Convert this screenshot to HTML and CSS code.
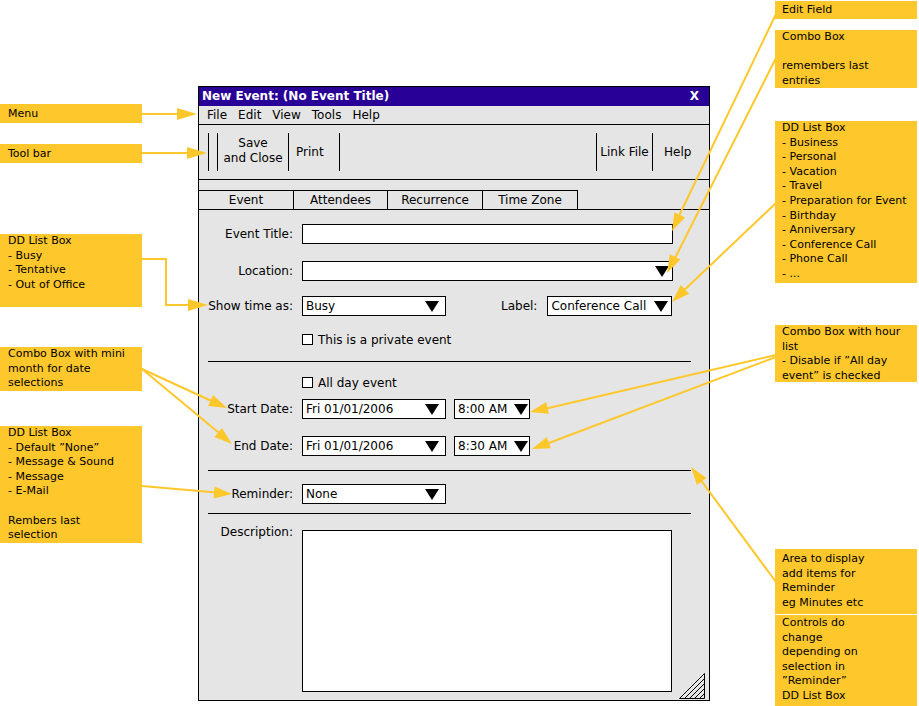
FILE: index.html
```html
<!DOCTYPE html>
<html>
<head>
<meta charset="utf-8">
<title>New Event</title>
<link rel="stylesheet" href="styles.css">
</head>
<body>
<div class="canvas">
  <div class="note l n-menu">Menu</div>
  <div class="note l n-tool">Tool bar</div>
  <div class="note l n-busy">DD List Box<br>- Busy<br>- Tentative<br>- Out of Office</div>
  <div class="note l n-month">Combo Box with mini<br>month for date<br>selections</div>
  <div class="note l n-remind">DD List Box<br>- Default ”None”<br>- Message &amp; Sound<br>- Message<br>- E-Mail<br><br>Rembers last<br>selection</div>

  <div class="note r n-edit">Edit Field</div>
  <div class="note r n-combo">Combo Box<br><br>remembers last<br>entries</div>
  <div class="note r n-label">DD List Box<br>- Business<br>- Personal<br>- Vacation<br>- Travel<br>- Preparation for Event<br>- Birthday<br>- Anniversary<br>- Conference Call<br>- Phone Call<br>- ...</div>
  <div class="note r n-hour">Combo Box with hour<br>list<br>- Disable if ”All day<br>event” is checked</div>
  <div class="note r n-area">Area to display<br>add items for<br>Reminder<br>eg Minutes etc</div>
  <div class="note r n-ctrl">Controls do<br>change<br>depending on<br>selection in<br>”Reminder”<br>DD List Box</div>

  <div class="dialog">
    <div class="titlebar"><span>New Event: (No Event Title)</span><span class="close">X</span></div>
    <div class="menubar"><span>File</span><span>Edit</span><span>View</span><span>Tools</span><span>Help</span></div>
    <div class="toolbar">
      <i class="sep"></i><i class="sep sep2"></i>
      <div class="tb-btn save">Save<br>and Close</div><i class="sep"></i>
      <div class="tb-btn print">Print</div><i class="sep"></i>
      <div class="tb-spacer"></div>
      <i class="sep"></i><div class="tb-btn link">Link File</div><i class="sep"></i>
      <div class="tb-btn help">Help</div>
    </div>
    <div class="tabs">
      <div class="tab t1">Event</div>
      <div class="tab t2">Attendees</div>
      <div class="tab t3">Recurrence</div>
      <div class="tab t4">Time Zone</div>
    </div>
    <div class="form">
      <div class="row r-title"><div class="lbl">Event Title:</div><div class="field wide"></div></div>
      <div class="row r-loc"><div class="lbl">Location:</div><div class="sel wide a3"><span class="tx"></span><i class="arr"></i></div></div>
      <div class="row r-show"><div class="lbl">Show time as:</div><div class="sel mid a6"><span class="tx">Busy</span><i class="arr"></i></div>
        <div class="lbl2">Label:</div><div class="sel lab a3"><span class="tx">Conference Call</span><i class="arr"></i></div></div>
      <div class="row chk r-private"><i class="box"></i><span>This is a private event</span></div>
      <div class="hr hr1"></div>
      <div class="row chk r-allday"><i class="box"></i><span>All day event</span></div>
      <div class="row r-start"><div class="lbl">Start Date:</div><div class="sel mid a6"><span class="tx">Fri 01/01/2006</span><i class="arr"></i></div>
        <div class="sel time a1"><span class="tx">8:00 AM</span><i class="arr"></i></div></div>
      <div class="row r-end"><div class="lbl">End Date:</div><div class="sel mid a6"><span class="tx">Fri 01/01/2006</span><i class="arr"></i></div>
        <div class="sel time a1"><span class="tx">8:30 AM</span><i class="arr"></i></div></div>
      <div class="hr hr2"></div>
      <div class="row r-remind"><div class="lbl">Reminder:</div><div class="sel mid a6"><span class="tx">None</span><i class="arr"></i></div></div>
      <div class="hr hr3"></div>
      <div class="row r-desc"><div class="lbl desc-lbl">Description:</div><div class="textarea"></div></div>
    </div>
    <svg class="grip" width="26" height="26" viewBox="0 0 26 26">
      <g stroke="#000" stroke-width="1" fill="none">
        <polyline points="0.5,25.5 25.5,0.5 25.5,25.5 0.5,25.5"/>
        <line x1="5.5" y1="25.5" x2="25.5" y2="5.5"/>
        <line x1="10.5" y1="25.5" x2="25.5" y2="10.5"/>
        <line x1="15.5" y1="25.5" x2="25.5" y2="15.5"/>
        <line x1="20.5" y1="25.5" x2="25.5" y2="20.5"/>
      </g>
    </svg>
  </div>

  <svg class="arrows" width="919" height="706" viewBox="0 0 919 706">
    <g stroke="#fec72b" stroke-width="2" fill="none">
      <line x1="142" y1="114" x2="190" y2="114"/>
      <line x1="142" y1="153" x2="198" y2="153"/>
      <polyline points="142,259 166,259 166,305 198,305"/>
      <line x1="142" y1="369" x2="218" y2="404"/>
      <line x1="142" y1="369" x2="224" y2="437"/>
      <line x1="142" y1="486" x2="222" y2="493"/>
      <line x1="776" y1="14" x2="677" y2="220"/>
      <line x1="776" y1="58" x2="672" y2="264"/>
      <line x1="776" y1="203" x2="678" y2="296"/>
      <line x1="776" y1="355" x2="540" y2="410"/>
      <line x1="776" y1="357" x2="541" y2="446"/>
      <line x1="776" y1="582" x2="697" y2="475"/>
    </g>
    <g fill="#fec72b">
      <polygon points="177,108 177,120 197,114"/>
      <polygon points="187,147 187,159 207,153"/>
      <polygon points="188,299 188,311 208,305"/>
      <polygon points="227,408 213.1,395.1 208.1,406"/>
      <polygon points="232,444 222,427.9 214.4,437.1"/>
      <polygon points="232,494 214.6,486.4 213.6,498.4"/>
      <polygon points="672,231 674.4,212.2 685.2,217.4"/>
      <polygon points="667,273 669.8,254.2 680.5,259.6"/>
      <polygon points="672,302 680.7,285.1 689.1,293.7"/>
      <polygon points="530,412 546.2,402.1 548.9,413.7"/>
      <polygon points="532,449 546.7,437 550.9,448.2"/>
      <polygon points="691,467 706.5,477.9 696.9,485.1"/>
    </g>
  </svg>
</div>
</body>
</html>
```

FILE: styles.css
```css
html, body {
  margin: 0;
  padding: 0;
  background: #ffffff;
}

.canvas {
  position: relative;
  width: 919px;
  height: 706px;
  overflow: hidden;
  font-family: "DejaVu Sans", "Liberation Sans", sans-serif;
  color: #000;
}

/* annotation notes */
.note {
  position: absolute;
  box-sizing: border-box;
  background: #fec72b;
  font-size: 11px;
  line-height: 14.6px;
  white-space: nowrap;
  overflow: hidden;
}
.note.l { left: 0; width: 142px; padding-left: 8px; }
.note.r { left: 775px; width: 142px; padding-left: 7px; }

.n-menu { top: 104px; height: 19px; line-height: 19px; }
.n-tool { top: 144px; height: 19px; line-height: 19px; }
.n-busy { top: 234px; height: 73px; }
.n-month { top: 347px; height: 44px; }
.n-remind { top: 426px; height: 117px; }

.n-edit { top: 1px; height: 18px; line-height: 18px; }
.n-combo { top: 30px; height: 58px; }
.n-label { top: 121px; height: 162px; }
.n-hour { top: 325px; height: 57px; }
.n-area { top: 549px; height: 65px; width: 104px; padding-top: 3px; }
.n-ctrl { top: 615px; height: 91px; width: 104px; padding-top: 1px; }

.arrows {
  position: absolute;
  left: 0;
  top: 0;
  pointer-events: none;
}

/* dialog window */
.dialog {
  position: absolute;
  left: 198px;
  top: 86px;
  width: 512px;
  height: 615px;
  box-sizing: border-box;
  border: 1px solid #000;
  background: #e5e5e5;
  font-size: 12px;
}

.titlebar {
  height: 19px;
  background: #280098;
  color: #fff;
  font-weight: bold;
  line-height: 19px;
  display: flex;
  justify-content: space-between;
  padding: 0 10px 0 3px;
}
.titlebar .close { font-weight: bold; }

.menubar {
  height: 18px;
  line-height: 18px;
  border-bottom: 1px solid #000;
  padding-left: 8px;
  display: flex;
  gap: 11px;
}

.toolbar {
  height: 54px;
  border-bottom: 1px solid #000;
  display: flex;
  align-items: center;
  padding-left: 9px;
}
.sep {
  display: block;
  width: 1px;
  height: 38px;
  background: #000;
  flex: none;
}
.sep2 { margin-left: 8px; }
.tb-btn {
  flex: none;
  text-align: center;
  line-height: 15px;
}
.tb-btn.save { width: 70px; padding-bottom: 3px; }
.tb-btn.print { width: 50px; text-align: left; padding-left: 7px; box-sizing: border-box; }
.tb-spacer { flex: 1; }
.tb-btn.link { width: 55px; }
.tb-btn.help { width: 56px; text-align: left; padding-left: 11px; box-sizing: border-box; }

.tabs {
  height: 29px;
  border-bottom: 1px solid #000;
  padding-top: 10px;
  box-sizing: content-box;
  display: flex;
  align-items: flex-end;
}
.tabs { height: 19px; }
.tab {
  box-sizing: border-box;
  height: 19px;
  border-top: 1px solid #000;
  border-right: 1px solid #000;
  text-align: center;
  line-height: 18px;
}
.t1 { width: 95px; }
.t2 { width: 94px; }
.t3 { width: 95px; }
.t4 { width: 95px; }

/* form */
.form { padding-top: 14px; }
.row {
  display: flex;
  align-items: center;
  height: 20px;
}
.lbl {
  width: 94px;
  margin-right: 9px;
  text-align: right;
  flex: none;
  white-space: nowrap;
}
.lbl2 { margin-left: 55px; margin-right: 10px; }

.field, .sel, .textarea {
  box-sizing: border-box;
  border: 1px solid #000;
  background: #fff;
  flex: none;
}
.field { height: 20px; }
.wide { width: 371px; }
.mid { width: 144px; }
.lab { width: 125px; }
.time { width: 76px; margin-left: 8px; }

.sel {
  height: 20px;
  display: flex;
  align-items: center;
  padding-left: 3px;
  white-space: nowrap;
}
.sel .tx { flex: 1; }
.arr {
  display: block;
  width: 0;
  height: 0;
  border-left: 7.5px solid transparent;
  border-right: 7.5px solid transparent;
  border-top: 11px solid #000;
  flex: none;
}
.a1 .arr { margin-right: 1px; }
.a3 .arr { margin-right: 3px; }
.a6 .arr { margin-right: 6px; }

.chk {
  height: 13px;
  padding-left: 103px;
}
.box {
  display: block;
  width: 11px;
  height: 11px;
  box-sizing: border-box;
  border: 1px solid #000;
  background: #fff;
  margin-right: 5px;
}

.hr {
  height: 1px;
  background: #000;
  margin: 0 18px 0 9px;
}

.r-loc { margin-top: 17px; }
.r-show { margin-top: 15px; }
.r-private { margin-top: 17px; }
.hr1 { margin-top: 15px; }
.r-allday { margin-top: 14px; }
.r-start { margin-top: 10px; }
.r-end { margin-top: 17px; }
.hr2 { margin-top: 14px; }
.r-remind { margin-top: 13px; }
.hr3 { margin-top: 9px; }
.r-desc {
  margin-top: 16px;
  height: 162px;
  align-items: flex-start;
}
.desc-lbl { line-height: 14px; margin-top: -5px; }
.textarea { width: 370px; height: 162px; }

.grip {
  position: absolute;
  right: 4px;
  bottom: 1px;
}
```
